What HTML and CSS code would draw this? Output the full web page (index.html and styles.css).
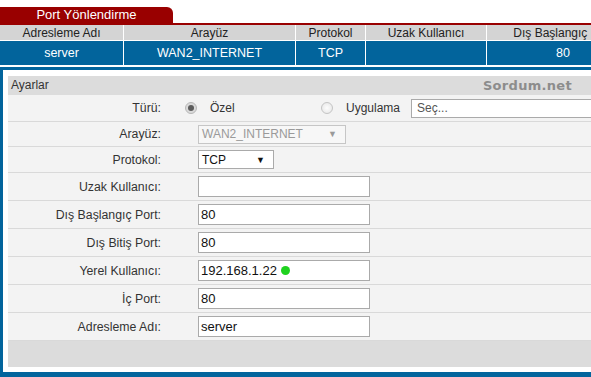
FILE: index.html
```html
<!DOCTYPE html>
<html lang="tr">
<head>
    <meta charset="UTF-8">
    <title>Port Yönlendirme</title>
    <link rel="stylesheet" href="styles.css">
</head>
<body>

    <div class="page">
        <!-- Tab -->
        <div class="tabs">
            <div class="tab">Port Yönlendirme</div>
        </div>

        <!-- Rule list -->
        <table class="rules">
            <thead>
                <tr>
                    <th class="col-name">Adresleme Adı</th>
                    <th class="col-if">Arayüz</th>
                    <th class="col-proto">Protokol</th>
                    <th class="col-remote">Uzak Kullanıcı</th>
                    <th class="col-port">Dış Başlangıç Port</th>
                </tr>
            </thead>
            <tbody>
                <tr class="selected">
                    <td>server</td>
                    <td>WAN2_INTERNET</td>
                    <td>TCP</td>
                    <td></td>
                    <td>80</td>
                </tr>
            </tbody>
        </table>

        <!-- Settings -->
        <div class="frame">
            <div class="panel">
                <div class="panel-head">
                    <span>Ayarlar</span>
                    <span class="brand">Sordum.net</span>
                </div>

                <div class="row type-row">
                    <div class="label">Türü:</div>
                    <div class="value type">
                        <span class="option first"><span class="radio checked"></span>Özel</span>
                        <span class="option"><span class="radio"></span>Uygulama</span>
                        <span class="field search">Seç...</span>
                    </div>
                </div>

                <div class="row short">
                    <div class="label">Arayüz:</div>
                    <div class="value">
                        <span class="select disabled wide">WAN2_INTERNET<span class="arrow">▼</span></span>
                    </div>
                </div>

                <div class="row mid">
                    <div class="label">Protokol:</div>
                    <div class="value">
                        <span class="select narrow">TCP<span class="arrow">▼</span></span>
                    </div>
                </div>

                <div class="row">
                    <div class="label">Uzak Kullanıcı:</div>
                    <div class="value"><span class="field"></span></div>
                </div>

                <div class="row">
                    <div class="label">Dış Başlangıç Port:</div>
                    <div class="value"><span class="field">80</span></div>
                </div>

                <div class="row">
                    <div class="label">Dış Bitiş Port:</div>
                    <div class="value"><span class="field">80</span></div>
                </div>

                <div class="row">
                    <div class="label">Yerel Kullanıcı:</div>
                    <div class="value"><span class="field">192.168.1.22<span class="online"></span></span></div>
                </div>

                <div class="row">
                    <div class="label">İç Port:</div>
                    <div class="value"><span class="field">80</span></div>
                </div>

                <div class="row">
                    <div class="label">Adresleme Adı:</div>
                    <div class="value"><span class="field">server</span></div>
                </div>

                <div class="panel-foot"></div>
            </div>
        </div>
    </div>

</body>
</html>
```

FILE: styles.css
```css
/* Global */
* {
    margin: 0;
    padding: 0;
    box-sizing: border-box;
}

body {
    font-family: 'Liberation Sans', Arial, sans-serif;
    font-size: 12px;
    color: #333;
    background-color: #fff;
    overflow: hidden;
}

.page {
    width: 640px;
}

/* Tab */
.tabs {
    padding-top: 7px;
    border-bottom: 2px solid #990000;
}

.tab {
    width: 173px;
    height: 16px;
    line-height: 16px;
    background-color: #990000;
    color: #fff;
    font-size: 13px;
    text-align: center;
    border-radius: 0 6px 0 0;
}

/* Rule list */
.rules {
    width: 640px;
    border-collapse: separate;
    border-spacing: 0;
    table-layout: fixed;
}

.rules th,
.rules td {
    border-right: 1px solid #fff;
    border-bottom: 1px solid #fff;
    text-align: center;
    white-space: nowrap;
    overflow: hidden;
}

.rules th {
    height: 16px;
    background-color: #d4d4d4;
    color: #222;
    font-weight: normal;
}

.rules td {
    height: 25px;
    font-size: 12.5px;
}

.rules .selected td {
    background-color: #02649c;
    color: #fff;
}

.col-name { width: 124px; }
.col-if { width: 172px; }
.col-proto { width: 70px; }
.col-remote { width: 121px; }

/* Settings frame */
.frame {
    margin-top: 1px;
    border-top: 3px solid #02649c;
    border-left: 3px solid #02649c;
    border-bottom: 5px solid #02649c;
    padding: 6px 0 5px 5px;
}

.panel {
    background-color: #f3f3f3;
}

.panel-head {
    height: 19px;
    line-height: 19px;
    padding: 0 68px 0 3px;
    background-color: #dcdcdc;
    display: flex;
    justify-content: space-between;
}

.brand {
    font-family: 'DejaVu Sans', sans-serif;
    font-weight: bold;
    font-size: 13px;
    color: #8c8c8c;
    letter-spacing: 0.3px;
}

.row {
    display: flex;
    align-items: center;
    height: 28px;
    border-bottom: 1px solid #d9d9d9;
}

.row.type-row { height: 27px; }
.row.short { height: 25px; }
.row.mid { height: 26px; }

.label {
    width: 172px;
    padding-right: 19px;
    text-align: right;
    font-size: 12.3px;
}

.value {
    flex: 1;
    display: flex;
    align-items: center;
    padding-left: 18px;
}

.value.type {
    padding-left: 5px;
}

.option {
    display: flex;
    align-items: center;
    gap: 13px;
    margin-right: 11px;
}

.option.first {
    width: 136px;
    margin-right: 0;
}

.radio {
    width: 12px;
    height: 12px;
    border-radius: 50%;
    border: 1px solid #c4c4c4;
    background: radial-gradient(circle, #fdfdfd 0%, #e4e4e4 100%);
    display: flex;
    align-items: center;
    justify-content: center;
}

.radio.checked {
    background: #dadada;
    border-color: #b8b8b8;
}

.radio.checked::after {
    content: "";
    width: 6px;
    height: 6px;
    border-radius: 50%;
    background-color: #5c5c5c;
}

.field {
    width: 172px;
    height: 21px;
    padding-left: 2px;
    border: 1px solid #aaa;
    background-color: #fff;
    color: #111;
    font-size: 13px;
    display: flex;
    align-items: center;
    gap: 4px;
}

.field.search {
    width: 200px;
    height: 19px;
    padding-left: 5px;
    font-size: 12px;
    color: #555;
}

.select {
    height: 19px;
    padding: 0 8px 0 3px;
    border: 1px solid #aaa;
    background-color: #fff;
    color: #111;
    display: flex;
    align-items: center;
    justify-content: space-between;
}

.select.wide { width: 148px; }
.select.narrow { width: 76px; }

.select.disabled {
    border-color: #c6c6c6;
    background-color: #f7f7f7;
    color: #9a9a9a;
}

.arrow {
    font-size: 9px;
}

.online {
    width: 9px;
    height: 9px;
    border-radius: 50%;
    background-color: #1fd21f;
}

.panel-foot {
    height: 26px;
    background-color: #dcdcdc;
}
```
